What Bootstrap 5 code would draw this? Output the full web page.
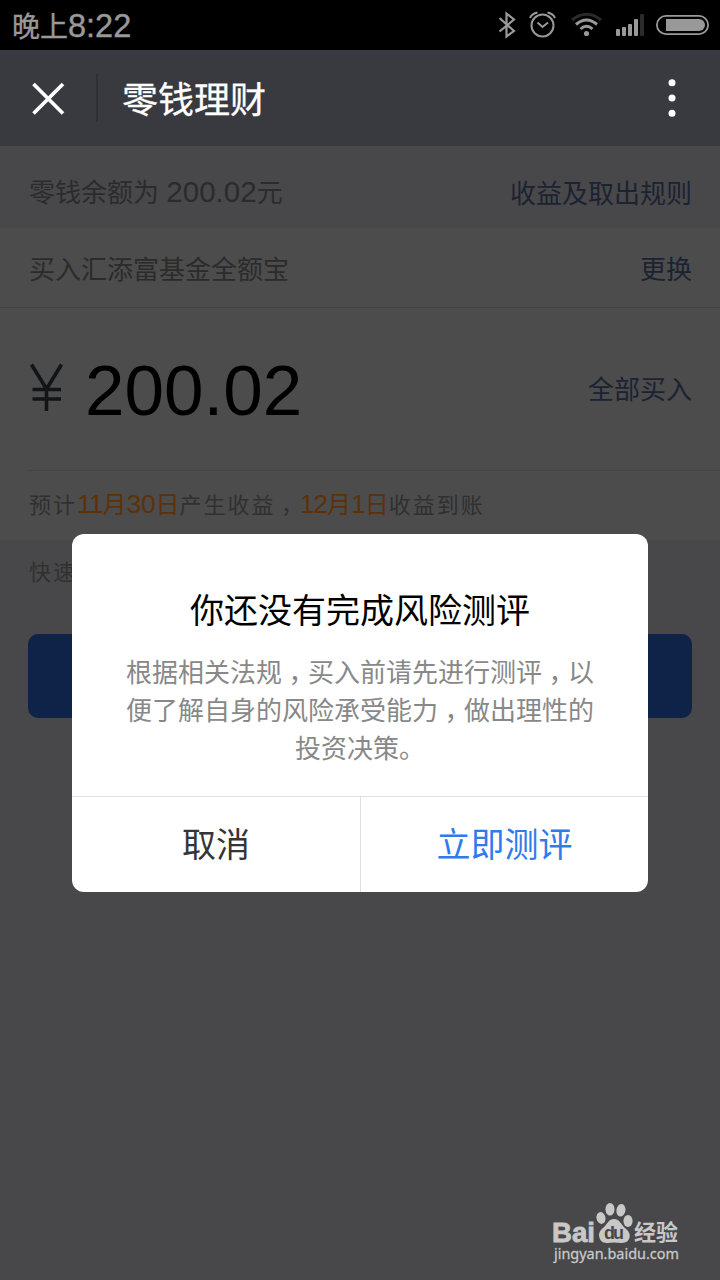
<!DOCTYPE html>
<html lang="zh-CN">
<head>
<meta charset="utf-8">
<meta name="viewport" content="width=device-width, initial-scale=1">
<title>零钱理财</title>
<link href="https://cdn.jsdelivr.net/npm/bootstrap@5.3.0/dist/css/bootstrap.min.css" rel="stylesheet">
<style>
body{font-family:"Noto Sans CJK SC",sans-serif;background:#48484a;height:1280px;overflow:hidden;color:#2b2b2b;line-height:1}
.lat{font-family:"Liberation Sans",sans-serif}
.statusbar{height:50px;background:#000;color:#999;padding:0 11px 0 12px}
.clock{font-size:28px;line-height:50px;-webkit-text-stroke:.4px #999}
.clock .lat{font-size:32.5px}
.appbar{height:96px;background:#393a3f;color:#fff}
.appbar h1{font-size:36px;line-height:94px;padding-bottom:2px;-webkit-text-stroke:.3px #fff}
.appbar .sep{width:2px;height:48px;background:#2e2f33}
.content-area{height:1134px}
.line{font-size:26px;padding:0 28px 0 29px;white-space:nowrap}
.balance{height:82px;padding-top:9px}
.balance .lat{font-size:29.6px;margin-left:-1px}
.fund{height:80px;background:#4c4c4c;border-bottom:1px solid #434343}
.amount{height:162px;background:#4c4c4c}
.amount .act{padding-bottom:2px}
.sum{font-size:71px;color:#000;line-height:72px;padding:4px 0 0 5px}
.act{color:#1b2232}
.notewrap{background:#4c4c4c;height:70px;padding-left:28px}
.note{border-top:1px solid #444;height:70px;font-size:22px;letter-spacing:2px;line-height:63px;padding-left:1px;color:#303030;white-space:nowrap}
.note b{font-weight:400;color:#5c310a;font-size:24px;letter-spacing:0}
.note b .lat{font-size:26.5px;letter-spacing:-.2px}
.note b .one{letter-spacing:-1px}
.tip{font-size:22px;letter-spacing:2px;color:#303030;padding-left:29px;height:94px;line-height:60px}
.buy{height:84px;margin:0 28px;background:#0e2347;border-radius:10px;border:0}
.scrim{inset:0}
.dialog{width:576px;height:358px;border-radius:12px;background:#fff;overflow:hidden}
.dialog h2{font-size:34px;line-height:40px;color:#000;margin:55px 0 0}
.dialog p{font-size:26px;line-height:38px;color:#888;margin:23px 0 0;white-space:nowrap}
.dialog .acts{height:96px;border-top:1px solid #dfdfdf}
.dialog .acts button{border:0;background:none;font-size:34px;color:#353535;padding:0 0 3px}
.dialog .acts button+button{border-left:1px solid #dfdfdf;color:#2f7bec}
.cm{display:inline-block;width:1em;text-align:center;font-feature-settings:"halt";letter-spacing:0}
.note .cm{margin-right:2px}
.wm{right:41px;bottom:16px;width:127px;color:#c8c8c8}
</style>
</head>
<body>
<div class="statusbar d-flex align-items-center justify-content-between">
  <div class="clock">晚上<span class="lat">8:22</span></div>
  <svg width="216" height="50" viewBox="493 0 216 50" fill="none" stroke="#999">
    <path d="M499.500 18L514 31L506.500 36.500V13.500L514 19.500L499.500 31.500" stroke-width="2.200"/>
    <circle cx="542.500" cy="25.500" r="11" stroke-width="2"/>
    <path d="M537.500 22.500L542.500 27L548 22.500M530 18Q532 13.500 537.500 12.500M555 18Q553 13.500 547.500 12.500" stroke-width="2"/>
    <path d="M572 20Q586.500 8.500 601 20" stroke="#2b2b2b" stroke-width="3"/>
    <path d="M576 24.500Q586.500 15.500 597 24.500" stroke-width="3"/>
    <path d="M580.500 29Q586.500 23.500 592.500 29" stroke-width="3"/>
    <circle cx="586.500" cy="33.500" r="2.600" fill="#999" stroke="none"/>
    <g fill="#999" stroke="none"><rect x="616" y="29" width="4" height="7" rx="1"/><rect x="622" y="27" width="4" height="9" rx="1"/><rect x="628" y="24" width="4" height="12" rx="1"/><rect x="634" y="19" width="4" height="17" rx="1"/><rect x="640" y="14" width="4" height="22" rx="1" fill="#2b2b2b"/></g>
    <rect x="656.900" y="15.900" width="51.200" height="18.200" rx="9.100" stroke-width="1.800"/>
    <path d="M666 19H699A6 6 0 0 1 699 31H666Z" fill="#999" stroke="none"/>
  </svg>
</div>
<header class="appbar d-flex align-items-center">
  <svg width="96" height="96" viewBox="0 0 96 96" stroke="#fff" stroke-width="3.700"><path d="M33.500 34L63 63.500M63 34L33.500 63.500"/></svg>
  <span class="sep"></span>
  <h1 class="m-0 ms-4 fw-normal">零钱理财</h1>
  <svg class="ms-auto" width="96" height="96" fill="#fff"><circle cx="48" cy="32.700" r="3.500"/><circle cx="48" cy="48" r="3.500"/><circle cx="48" cy="63.300" r="3.500"/></svg>
</header>
<main class="content-area position-relative">
  <div class="line balance d-flex align-items-center justify-content-between">
    <span>零钱余额为<span class="lat"> 200.02</span>元</span><span class="act">收益及取出规则</span>
  </div>
  <div class="line fund d-flex align-items-center justify-content-between">
    <span>买入汇添富基金全额宝</span><span class="act">更换</span>
  </div>
  <div class="line amount d-flex align-items-center justify-content-between">
    <div class="d-flex align-items-center">
      <svg width="35" height="54" viewBox="29 362 35 54" fill="none" stroke="#111518" stroke-width="3.600"><path d="M31.500 364.500L46.500 389L61.500 364.500M46.500 387V411M32.500 389.500H61M32.500 399H61"/></svg>
      <span class="lat sum ms-3">200.02</span>
    </div>
    <span class="act">全部买入</span>
  </div>
  <div class="notewrap"><div class="note">预计<b><span class="lat one">11</span>月<span class="lat">30</span>日</b>产生收益<span class="cm">，</span><b><span class="lat one">12</span>月<span class="lat one">1</span>日</b>收益到账</div></div>
  <div class="tip">快速</div>
  <button class="buy d-block" style="width:664px" aria-label="买入"></button>
  <div class="scrim position-absolute d-flex align-items-center justify-content-center">
    <section class="dialog d-flex flex-column text-center" role="dialog">
      <h2 class="fw-normal">你还没有完成风险测评</h2>
      <p>根据相关法规<span class="cm">，</span>买入前请先进行测评<span class="cm">，</span>以<br>便了解自身的风险承受能力<span class="cm">，</span>做出理性的<br>投资决策。</p>
      <div class="acts d-flex mt-auto"><button class="w-50">取消</button><button class="w-50">立即测评</button></div>
    </section>
  </div>
  <svg class="wm position-absolute overflow-visible" height="62" viewBox="552 1202 127 62" fill="#c8c8c8">
    <text x="552" y="1241.500" font-family="Liberation Sans" font-weight="700" font-size="28" textLength="43" lengthAdjust="spacingAndGlyphs" stroke="#c8c8c8" stroke-width=".8">Bai</text>
    <ellipse cx="601" cy="1218" rx="4.500" ry="6" transform="rotate(-12 601 1218)"/><ellipse cx="610" cy="1209.300" rx="4.500" ry="6.300"/><ellipse cx="621" cy="1210.300" rx="4.500" ry="6.300" transform="rotate(10 621 1210)"/><ellipse cx="628" cy="1221" rx="4.600" ry="6"/>
    <path d="M614 1219C608 1219 607 1225 603 1228C599 1231 598 1235 600 1239C602 1244 608 1243 614 1242.500C620 1243 627 1244 629 1239C631 1235 629 1231 625 1228C621 1225 620 1219 614 1219Z"/>
    <text x="604" y="1239" font-family="Liberation Sans" font-weight="700" font-size="18" fill="#48484a" textLength="20">du</text>
    <text x="634" y="1240" font-family="Noto Sans CJK SC" font-weight="700" font-size="22" textLength="44">经验</text>
    <text x="554" y="1259" font-family="Noto Sans" font-size="15" textLength="125" lengthAdjust="spacingAndGlyphs" stroke="#c8c8c8" stroke-width=".3">jingyan.baidu.com</text>
  </svg>
</main>
<script src="https://cdn.jsdelivr.net/npm/bootstrap@5.3.0/dist/js/bootstrap.bundle.min.js"></script>
</body>
</html>
